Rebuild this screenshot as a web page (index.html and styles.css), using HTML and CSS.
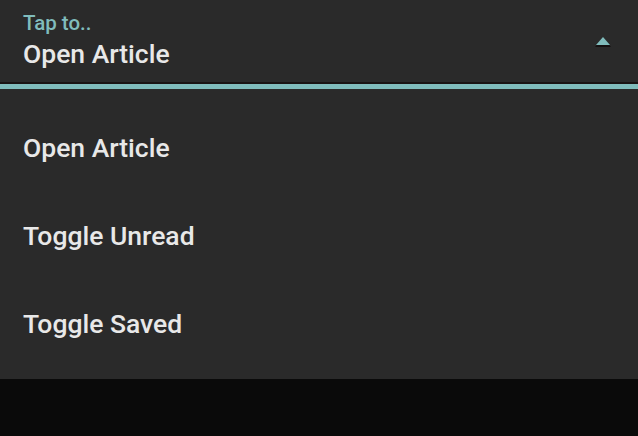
FILE: index.html
```html
<!DOCTYPE html>
<html lang="en">
<head>
  <meta charset="UTF-8" />
  <title>Tap to..</title>
  <link rel="stylesheet" href="styles.css">
</head>
<body>
  <div class="sheet">
    <div class="field">
      <div class="field-text">
        <span class="field-label">Tap to..</span>
        <span class="field-value">Open Article</span>
      </div>
      <svg class="caret" width="16" height="10" viewBox="0 0 16 10">
        <polygon class="caret-shadow" points="8,1 16,10 0,10" />
        <polygon points="8,0 15,8 1,8" />
      </svg>
    </div>
    <ul class="options">
      <li>Open Article</li>
      <li>Toggle Unread</li>
      <li>Toggle Saved</li>
    </ul>
  </div>
</body>
</html>
```

FILE: styles.css
```css
:root {
  --bg: #2a2a2a;
  --bg-dark: #0a0a0a;
  --accent: #80bcbc;
  --text: #e8e8e8;
}
* { box-sizing: border-box; margin: 0; padding: 0; }
body {
  font-family: Roboto, "Noto Sans", sans-serif;
  background: var(--bg-dark);
  color: var(--text);
  width: 638px;
  height: 436px;
  overflow: hidden;
}
.sheet {
  background: var(--bg);
  height: 379px;
}
.field {
  display: flex;
  align-items: flex-start;
  justify-content: space-between;
  padding: 13px 27px 0 23px;
  height: 89px;
  border-bottom: 5px solid var(--accent);
  box-shadow: inset 0 -2px 0 #1a1414;
}
.field-text {
  display: flex;
  flex-direction: column;
}
.field-label {
  color: var(--accent);
  font-size: 20.5px;
  font-weight: 500;
  line-height: 21px;
}
.field-value {
  font-size: 26.5px;
  font-weight: 500;
  line-height: 30px;
  margin-top: 5px;
}
.caret {
  fill: var(--accent);
  margin-top: 24px;
}
.caret-shadow { fill: #141010; }
.options {
  list-style: none;
  padding-top: 15px;
}
.options li {
  font-size: 26.5px;
  font-weight: 500;
  line-height: 88px;
  height: 88px;
  padding-left: 23px;
}
```
